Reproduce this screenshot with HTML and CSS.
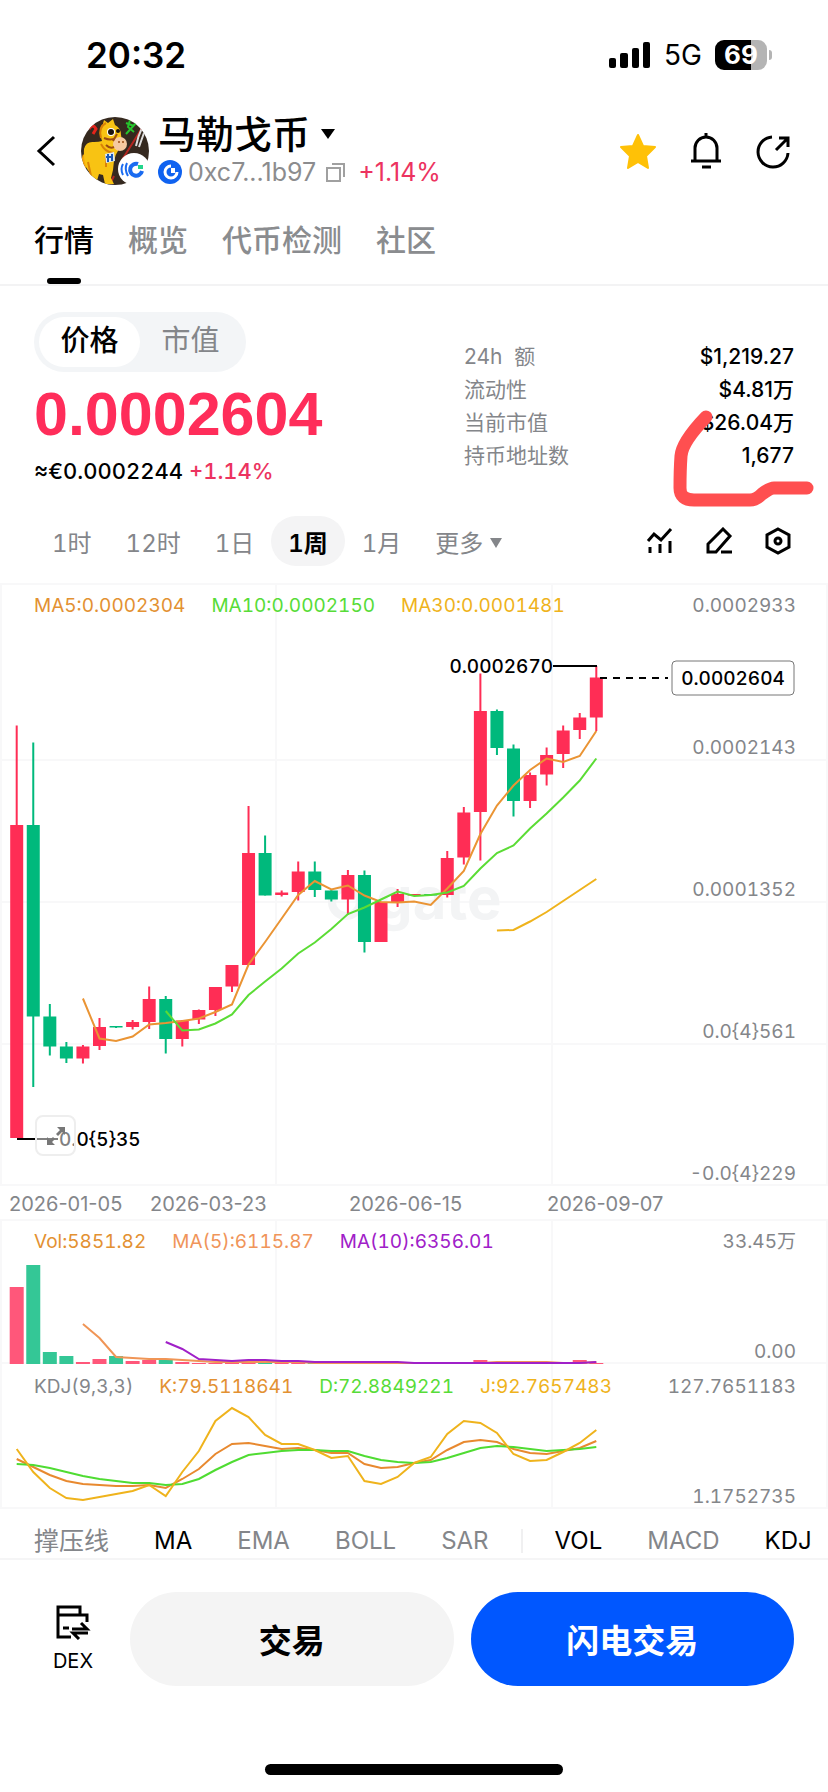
FILE: index.html
```html
<!DOCTYPE html>
<html lang="zh-CN">
<head>
    <meta charset="UTF-8">
    <meta name="viewport" content="width=device-width, initial-scale=1.0">
    <title>马勒戈币</title>
    <link rel="stylesheet" href="styles.css">
</head>
<body>
    <div class="status-bar">
        <span class="clock">20:32</span>
        <div class="status-icons">
            <svg class="signal" width="42" height="26" viewBox="0 0 42 26">
                <rect x="0" y="16" width="7" height="10" rx="2"/>
                <rect x="11" y="11" width="8" height="15" rx="2"/>
                <rect x="23" y="6" width="7" height="20" rx="2"/>
                <rect x="34" y="0" width="7" height="26" rx="2"/>
            </svg>
            <span class="network">5G</span>
            <span class="battery">69</span>
        </div>
    </div>

    <header class="header">
        <button type="button" class="icon-btn back" aria-label="返回">
            <svg width="20" height="32" viewBox="0 0 20 32"><path d="M18 2 3 16l15 14" fill="none" stroke="#000" stroke-width="3"/></svg>
        </button>
        <svg class="avatar" width="70" height="70" viewBox="0 0 70 70">
            <defs><clipPath id="coin"><circle cx="35" cy="35" r="34"/></clipPath></defs>
            <g clip-path="url(#coin)">
                <rect width="70" height="70" fill="#35291f"/>
                <path d="M9 13q4-6 7 0l-3 5" fill="none" stroke="#e3241b" stroke-width="3"/>
                <path d="M46 7l8 3M50 4l-2 7 6 5M56 7l-10 11" fill="none" stroke="#25c32c" stroke-width="2"/>
                <path d="M62 12 42 44M30 68l4-8" stroke="#b32620" stroke-width="2"/>
                <path d="M62 12q-4 8-6 18M65 14l-6 17" stroke="#ddd" stroke-width="2" fill="none"/>
                <path d="M3 38q-3 8 2 16l5-8z" fill="#f7a70c"/>
                <path d="M4 33q2-8 10-7 5 0 8-1-3-8 0-14l2-7 4 3 5-4 2 6q6 3 6 10l1 5q-4 4-3 9-4 6-5 12l-1 9-2 8 3 6h-9l-2-9-4-1-3 10-2 3H8l2-14q-7-8-6-24z" fill="#f8c313"/>
                <path d="M21 22q-3-11 5-15M8 46l3 14M26 38v13M21 28q4 8 12 9" fill="none" stroke="#d98207" stroke-width="2"/>
                <circle cx="40" cy="28" r="7" fill="#f6c9a0"/>
                <path d="M24 22q7 3 11 0M26 29q4 4 8 2M37 18l-4 7" stroke="#9b4b12" stroke-width="2" fill="none"/>
                <circle cx="31" cy="16" r="4" fill="#fff"/><circle cx="31" cy="16" r="3" fill="#1b1410"/>
                <circle cx="38" cy="15" r="2" fill="#1b1410"/>
                <circle cx="39" cy="26" r="1" fill="#9b4b12"/><circle cx="43" cy="26" r="1" fill="#9b4b12"/>
                <path d="M25 38l9-2 1 9-9 2z" fill="#dbe9f5"/>
                <path d="M28 38v8M26 41h5M32 38v7" stroke="#1a58b8" stroke-width="2" fill="none"/>
            </g>
            <circle cx="54" cy="53" r="16" fill="#fff"/>
            <path d="M58 48a6 6 0 1 0 4 7" fill="none" stroke="#1a6bf0" stroke-width="4"/>
            <path d="M58 49h5v4h-5z" fill="#22d58b"/>
            <path d="M47 47q-3 6 1 13M43 48q-3 5 0 11" fill="none" stroke="#1a6bf0" stroke-width="2"/>
        </svg>
        <div class="token">
            <h1 class="token-name">马勒戈币
                <svg width="16" height="10" viewBox="0 0 16 10"><path d="M1 0h14L8 10z"/></svg>
            </h1>
            <div class="token-sub">
                <svg width="24" height="24" viewBox="0 0 24 24"><circle cx="12" cy="12" r="12" fill="#0f62f0"/><path d="M13 6a6 6 0 1 0 6 6" fill="none" stroke="#fff" stroke-width="3"/><path d="M13 8h4v5h-4z" fill="#fff"/></svg>
                <span class="address">0xc7...1b97</span>
                <svg width="20" height="20" viewBox="0 0 20 20" fill="none" stroke="#a0a0a0" stroke-width="2"><path d="M1 6h13v13H1zM6 2h12v13"/></svg>
                <span class="up">+1.14%</span>
            </div>
        </div>
        <div class="header-actions">
            <button type="button" class="icon-btn" aria-label="收藏">
                <svg width="38" height="38" viewBox="0 0 38 38"><path d="M19 3l5 11 12 1-9 9 2 12-10-6-10 6 2-12-9-9 12-1z" fill="#ffc107" stroke="#ffc107" stroke-width="2" stroke-linejoin="round"/></svg>
            </button>
            <button type="button" class="icon-btn" aria-label="提醒">
                <svg width="38" height="38" viewBox="0 0 38 38" fill="none" stroke="#000" stroke-width="3"><path d="M19 1v4M8 29V16a11 11 0 0 1 22 0v13M4 29h30M15 35h9"/></svg>
            </button>
            <button type="button" class="icon-btn" aria-label="分享">
                <svg width="38" height="38" viewBox="0 0 38 38" fill="none" stroke="#000" stroke-width="3"><path d="M17 5a15 15 0 1 0 16 16M21 18 33 6M24 6h9v9"/></svg>
            </button>
        </div>
    </header>

    <nav class="tabs">
        <a href="#market" class="tab active">行情</a>
        <a href="#overview" class="tab">概览</a>
        <a href="#check" class="tab">代币检测</a>
        <a href="#community" class="tab">社区</a>
    </nav>

    <section class="summary" id="market">
        <div class="price-block">
            <div class="toggle">
                <button type="button" class="toggle-btn active">价格</button>
                <button type="button" class="toggle-btn">市值</button>
            </div>
            <div class="price">0.0002604</div>
            <div class="price-sub">≈€0.0002244 <span class="up">+1.14%</span></div>
        </div>
        <div class="stats">
            <dl>
                <div><dt>24h&nbsp; 额</dt><dd>$1,219.27</dd></div>
                <div><dt>流动性</dt><dd>$4.81万</dd></div>
                <div><dt>当前市值</dt><dd>$26.04万</dd></div>
                <div><dt>持币地址数</dt><dd>1,677</dd></div>
            </dl>
            <svg class="marker" width="144" height="102" viewBox="0 0 144 102"><path d="M36 9Q12 34 11 48T10 80Q10 92 24 92H80Q86 92 92 86 100 80 104 80H137" fill="none" stroke="#ff4f50" stroke-width="13" stroke-linecap="round"/></svg>
        </div>
    </section>

    <div class="periods">
        <button type="button" class="period">1时</button>
        <button type="button" class="period">12时</button>
        <button type="button" class="period">1日</button>
        <button type="button" class="period active">1周</button>
        <button type="button" class="period">1月</button>
        <button type="button" class="period">更多 <svg width="12" height="10" viewBox="0 0 12 10"><path d="M0 0h12L6 10z" fill="#84868a"/></svg></button>
        <div class="tools">
            <button type="button" class="icon-btn" aria-label="指标">
                <svg width="28" height="28" viewBox="0 0 28 28" fill="none" stroke="#000" stroke-width="3"><path d="M2 14 8 7l7 6L25 2M4 20v6M14 17v9M24 14v12"/></svg>
            </button>
            <button type="button" class="icon-btn" aria-label="画线">
                <svg width="28" height="28" viewBox="0 0 28 28" fill="none" stroke="#000" stroke-width="3"><path d="M18 2l7 7L11 25H3v-8zM16 25h11"/></svg>
            </button>
            <button type="button" class="icon-btn" aria-label="设置">
                <svg width="28" height="28" viewBox="0 0 28 28" fill="none" stroke="#000" stroke-width="3"><path d="M14 2l11 6v12l-11 6L3 20V8z"/><circle cx="14" cy="14" r="3"/></svg>
            </button>
        </div>
    </div>

    <section class="panel">
        <svg class="plot" id="kline" viewBox="0 0 828 603"></svg>
        <div class="legend">
            <span class="orange">MA5:0.0002304</span>
            <span class="green">MA10:0.0002150</span>
            <span class="yellow">MA30:0.0001481</span>
        </div>
        <div class="scale">
            <span>0.0002933</span>
            <span>0.0002143</span>
            <span>0.0001352</span>
            <span>0.0{4}561</span>
            <span>-0.0{4}229</span>
        </div>
        <button type="button" class="expand" aria-label="全屏">
            <svg width="22" height="22" viewBox="0 0 22 22" fill="#777"><path d="M12 2h8v8l-3-3-4 4-2-2 4-4zM2 12v8h8l-3-3 3-3-2-2-3 3z"/></svg>
        </button>
    </section>

    <div class="dates">
        <span>2026-01-05</span>
        <span>2026-03-23</span>
        <span>2026-06-15</span>
        <span>2026-09-07</span>
    </div>

    <section class="panel">
        <svg class="plot" id="volume" viewBox="0 0 828 145"></svg>
        <div class="legend">
            <span class="orange">Vol:5851.82</span>
            <span class="coral">MA(5):6115.87</span>
            <span class="purple">MA(10):6356.01</span>
        </div>
        <div class="scale">
            <span>33.45万</span>
            <span>0.00</span>
        </div>
    </section>

    <section class="panel">
        <svg class="plot" id="kdj" viewBox="0 0 828 145"></svg>
        <div class="legend">
            <span class="grey">KDJ(9,3,3)</span>
            <span class="orange">K:79.5118641</span>
            <span class="green">D:72.8849221</span>
            <span class="yellow">J:92.7657483</span>
        </div>
        <div class="scale">
            <span>127.7651183</span>
            <span>1.1752735</span>
        </div>
    </section>

    <div class="indicators">
        <button type="button" class="indicator">撑压线</button>
        <button type="button" class="indicator active">MA</button>
        <button type="button" class="indicator">EMA</button>
        <button type="button" class="indicator">BOLL</button>
        <button type="button" class="indicator">SAR</button>
        <span class="divider"></span>
        <button type="button" class="indicator active">VOL</button>
        <button type="button" class="indicator">MACD</button>
        <button type="button" class="indicator active">KDJ</button>
    </div>

    <footer class="trade-bar">
        <a href="#dex" class="dex">
            <svg width="36" height="36" viewBox="0 0 36 36" fill="none" stroke="#000" stroke-width="3"><path d="M16 33H3V3h22v8M3 11h29v7M8 24h6M17 25h15l-6-6M33 29H18l6 6"/></svg>
            DEX
        </a>
        <button type="button" class="trade">交易</button>
        <button type="button" class="trade primary">闪电交易</button>
    </footer>
    <div class="home-indicator"></div>

    <script>
        const RED = '#ff2d55';
        const GREEN = '#00b97c';
        const x = i => 16.7 + i * 16.56;

        // high, body top, body bottom, low, up/down
        const candles = [
            [142.5, 242, 555, 555, 1], [159.5, 242, 433.5, 504, 0], [421, 433.5, 463.5, 472.5, 0],
            [459, 463.5, 475.5, 480, 0], [462, 463.5, 475.5, 480.5, 1], [435, 444, 463, 467, 1],
            [443, 443, 444.5, 445, 0], [437, 439, 444, 446.5, 1], [403.5, 416, 439, 446, 1],
            [413, 416, 456, 470.5, 0], [437, 437.5, 456, 463.5, 1], [426.5, 427, 436.5, 441, 1],
            [404, 404, 427, 433, 1], [382, 382, 403.5, 409, 1], [223, 270, 382, 382, 1],
            [252.5, 270, 312.5, 312.5, 0], [307.5, 309.5, 312, 313.5, 1], [278.5, 288.5, 309, 317.5, 1],
            [278.5, 288.5, 307, 314, 0], [307, 307.5, 316.5, 318.5, 0], [287, 292, 316.5, 332, 1],
            [287.5, 292, 359, 369.5, 0], [319, 319, 359, 359, 1], [306, 311, 319.5, 324, 1],
            [311, 311, 312.5, 312.5, 1], [311, 311, 312.5, 312.5, 0], [268, 275, 312, 314.5, 1],
            [224, 229.5, 274.5, 281.5, 1], [90.5, 128, 229, 277.5, 1], [126.5, 128, 165, 172, 0],
            [161.5, 165.5, 218, 233.5, 0], [189.5, 192, 218, 225, 1], [164.5, 172, 191.5, 202.5, 1],
            [142.5, 147.5, 171, 185, 1], [130, 134.5, 147, 156, 1], [83, 94.5, 134.5, 148, 1]
        ];
        const ma5 = [415.5, 455.5, 458, 453.5, 441.5, 440, 438, 435.5, 429, 421.5, 381.5, 359, 335.5, 312, 298, 306.5, 302.5, 312.5, 319, 319.5, 318.5, 322, 305.5, 288, 251, 222.5, 202.5, 187, 175.5, 179, 173, 148];
        const ma10 = [428, 447.5, 446.5, 440.5, 431.5, 412, 398.5, 385.5, 370.5, 359.5, 346, 331, 324.5, 316.5, 308.5, 313, 312, 309.5, 303, 285.5, 270, 262.5, 245.5, 230.5, 214.5, 197.5, 175.5];
        const ma30 = [347.5, 347, 338.5, 329, 318, 307, 296];

        const volume = [77, 99, 12, 8, 2, 5, 8, 3, 4, 4, 2, 1, 1, 1, 2, 4, 2, 1, 1, 1, 1, 1, 1, 1, 1, 1, 1, 1, 4, 1, 1, 1, 1, 1, 4, 1];
        const volMa5 = [105, 119, 138, 139, 140, 140, 141, 142, 143, 143, 143, 143, 143, 143, 144, 144, 144, 144, 144, 144, 144, 144, 144, 144, 144, 143, 143, 143, 143, 144, 144, 143];
        const volMa10 = [123, 130, 140, 141, 142, 141, 141, 142, 142, 143, 143, 143, 143, 143, 143, 144, 144, 144, 144, 144, 144, 144, 144, 144, 144, 144, 143];

        const j = [85, 108, 124, 134, 136, 133, 130, 127, 121, 132, 108, 87, 57, 44, 53, 71, 80, 80, 86, 94, 92, 117, 120, 113, 99, 93, 70, 57, 59, 69, 90, 97, 96, 88, 79, 66];
        const k = [95, 103, 111, 117, 120, 121, 122, 122, 121, 124, 115, 105, 90, 80, 79, 82, 85, 84, 86, 89, 89, 100, 104, 103, 99, 96, 86, 78, 76, 78, 85, 89, 90, 87, 84, 77];
        const d = [100, 101, 104, 108, 112, 115, 117, 119, 119, 121, 120, 115, 106, 98, 91, 89, 87, 86, 86, 87, 87, 92, 96, 98, 99, 98, 94, 89, 84, 82, 83, 85, 87, 86, 85, 83];

        function line(points, start, color) {
            const path = points.map((y, n) => `${x(start + n)},${y}`).join(' ');
            return `<polyline points="${path}" fill="none" stroke="${color}" stroke-width="2"/>`;
        }
        function grid(height, rows) {
            const v = [1, 276, 552, 827].map(gx => `M${gx} 0V${height}`).join('');
            const h = rows.map(gy => `M0 ${gy}H828`).join('');
            return `<path d="${v}${h}" stroke="#f8f8f9" stroke-width="2"/>`;
        }
        function candle(c, i) {
            const color = c[4] ? RED : GREEN;
            return `<rect x="${x(i) - 1}" y="${c[0]}" width="2" height="${c[3] - c[0]}" fill="${color}"/>` +
                `<rect x="${x(i) - 6.5}" y="${c[1]}" width="13" height="${c[2] - c[1]}" fill="${color}"/>`;
        }

        document.getElementById('kline').innerHTML =
            grid(603, [1, 177, 319, 461, 602]) +
            '<circle cx="346" cy="319" r="14" class="mark-ring"/><text x="376" y="336" class="mark-text">gate</text>' +
            candles.map(candle).join('') +
            line(ma5, 4, '#ea9434') + line(ma10, 9, '#5bdc35') + line(ma30, 29, '#efb31c') +
            '<path d="M553 83H597M17 556H58" stroke="#000" stroke-width="2"/>' +
            '<path d="M600 95H668" stroke="#000" stroke-width="2" stroke-dasharray="7 6"/>' +
            '<text x="553" y="90" text-anchor="end" class="note">0.0002670</text>' +
            '<text x="59" y="563" class="note">0.0{5}35</text>' +
            '<rect x="672" y="78" width="122" height="34" rx="4" fill="#fff" stroke="#777"/>' +
            '<text x="733" y="102" text-anchor="middle" class="note">0.0002604</text>';

        document.getElementById('volume').innerHTML =
            grid(145, [1, 144]) +
            volume.map((h, i) => `<rect x="${x(i) - 7}" y="${145 - h}" width="14" height="${h}" fill="${candles[i][4] ? '#ff577a' : '#34c796'}"/>`).join('') +
            line(volMa5, 4, '#f09556') + line(volMa10, 9, '#a020c8');

        document.getElementById('kdj').innerHTML =
            grid(145, [144]) + line(k, 0, '#e8892f') + line(d, 0, '#4fdc32') + line(j, 0, '#efb31c');
    </script>
</body>
</html>
```
FILE: styles.css
```css
* { box-sizing: border-box; }
body {
    font-family: Inter, "Noto Sans CJK SC", sans-serif;
    background-color: #fff;
    color: #000;
    margin: 0;
}
button {
    font-family: inherit;
    border: none;
    background: none;
    padding: 0;
    cursor: pointer;
}
a { color: inherit; text-decoration: none; }
svg { display: block; }
.icon-btn { display: block; }
.up { color: #ec3360; }

.status-bar {
    display: flex;
    justify-content: space-between;
    align-items: center;
    height: 100px;
    padding: 10px 61px 0 86px;
}
.clock { font-size: 35px; font-weight: 600; }
.status-icons { display: flex; align-items: center; gap: 13px; }
.network { font-size: 28px; }
.battery {
    position: relative;
    width: 52px;
    height: 30px;
    line-height: 30px;
    border-radius: 9px;
    background: linear-gradient(90deg, #000 70%, #b4b4b4 70%);
    color: #fff;
    font-size: 26px;
    font-weight: 700;
    text-align: center;
}
.battery::after {
    content: "";
    position: absolute;
    left: 54px;
    top: 10px;
    width: 3px;
    height: 10px;
    border-radius: 0 3px 3px 0;
    background: #b4b4b4;
}

.header {
    display: flex;
    align-items: center;
    height: 102px;
    padding: 0 35px 0 36px;
}
.back { margin-right: 24px; }
.avatar { flex: none; }
.token { margin-left: 8px; }
.token-name {
    display: flex;
    align-items: center;
    gap: 10px;
    margin: 0;
    font-size: 38px;
    line-height: 42px;
    font-weight: 500;
}
.token-sub {
    display: flex;
    align-items: center;
    gap: 6px;
    font-size: 25px;
    line-height: 34px;
}
.address { color: #8c8c8e; margin-right: 4px; }
.token-sub .up { margin-left: 6px; }
.header-actions { display: flex; gap: 30px; margin-left: auto; }

.tabs {
    display: flex;
    gap: 34px;
    padding: 0 34px;
    border-bottom: 2px solid #f3f3f4;
}
.tab {
    position: relative;
    font-size: 30px;
    line-height: 76px;
    height: 82px;
    color: #8a8c8f;
    font-weight: 500;
}
.tab.active { color: #000; }
.tab.active::after {
    content: "";
    position: absolute;
    left: 13px;
    bottom: 0;
    width: 34px;
    height: 6px;
    border-radius: 3px;
    background: #000;
}

.summary {
    display: flex;
    justify-content: space-between;
    padding: 26px 34px 30px;
}
.toggle {
    display: flex;
    width: 212px;
    padding: 5px;
    border-radius: 30px;
    background: #f3f5f7;
}
.toggle-btn {
    width: 101px;
    height: 50px;
    border-radius: 25px;
    font-size: 29px;
    line-height: 48px;
    padding-bottom: 2px;
    color: #84868a;
}
.toggle-btn.active { background: #fff; color: #000; font-weight: 500; }
.price {
    font-family: "Liberation Sans", Arial, sans-serif;
    color: #ff2d5a;
    font-size: 61px;
    font-weight: 700;
    line-height: 84px;
}
.price-sub {
    font-size: 22px;
    line-height: 30px;
    font-weight: 500;
    font-variant-numeric: tabular-nums;
}
.stats { position: relative; width: 330px; padding-top: 28px; }
.stats dl { margin: 0; }
.stats dl div {
    display: flex;
    justify-content: space-between;
    font-size: 21px;
    line-height: 33px;
}
.stats dt { color: #84868a; }
.stats dd { margin: 0; font-weight: 500; }
.marker { position: absolute; right: -20px; top: 96px; }

.periods {
    display: flex;
    align-items: center;
    padding: 0 36px 17px 35px;
}
.period {
    padding: 0 17px;
    height: 50px;
    border-radius: 25px;
    font-size: 24px;
    font-variant-numeric: tabular-nums;
    color: #84868a;
}
.period.active { background: #f4f4f5; color: #000; font-weight: 600; }
.period svg { display: inline-block; margin-bottom: 4px; }
.tools { display: flex; gap: 31px; margin-left: auto; }

.panel { display: grid; position: relative; }
.plot { grid-area: 1 / 1; width: 100%; }
.plot, .legend, .scale { font-variant-numeric: tabular-nums; }
.legend {
    grid-area: 1 / 1;
    display: flex;
    align-self: start;
    gap: 26px;
    padding: 8px 34px 0;
    font-size: 19px;
    line-height: 30px;
}
.scale {
    grid-area: 1 / 1;
    justify-self: end;
    display: flex;
    flex-direction: column;
    justify-content: space-between;
    align-items: flex-end;
    padding: 8px 32px 0 0;
    margin-bottom: -3px;
    color: #84868a;
    font-size: 19px;
    line-height: 30px;
}
.orange { color: #e39132; }
.green { color: #57dc38; }
.yellow { color: #efb31c; }
.coral { color: #f0955a; }
.purple { color: #a020c8; }
.grey { color: #84868a; }
.note { font-size: 19px; font-weight: 500; }
.mark-text { font-size: 58px; font-weight: 700; fill: #f3f4f5; }
.mark-ring { fill: none; stroke: #f3f4f5; stroke-width: 8px; }
.expand {
    position: absolute;
    left: 35px;
    bottom: 30px;
    width: 41px;
    height: 41px;
    border: 2px solid #eee;
    border-radius: 8px;
    background: rgba(255, 255, 255, 0.5);
}
.expand svg { margin: auto; }

.dates {
    display: grid;
    grid-template-columns: 141fr 199fr 198fr 281fr;
    padding: 4px 0 0 9px;
    color: #84868a;
    font-size: 20px;
    line-height: 29px;
}

.indicators {
    display: flex;
    align-items: center;
    gap: 45px;
    padding: 14px 20px 0 34px;
    height: 51px;
    overflow: hidden;
    border-bottom: 2px solid #f5f5f6;
}
.indicator { font-size: 24px; line-height: 34px; color: #84868a; white-space: nowrap; }
.indicator:first-child { font-size: 25px; }
.indicator.active { color: #000; }
.divider { flex: none; width: 2px; height: 24px; margin: 0 -13px; background: #f0f0f1; }

.trade-bar {
    display: flex;
    align-items: center;
    gap: 17px;
    padding: 32px 34px 0;
}
.dex {
    display: flex;
    flex-direction: column;
    align-items: center;
    gap: 7px;
    width: 79px;
    padding-right: 1px;
    font-size: 20px;
    line-height: 28px;
}
.trade {
    flex: 1;
    height: 94px;
    border-radius: 47px;
    background: #f4f4f4;
    font-size: 33px;
    font-weight: 600;
}
.trade.primary { background: #0057ff; color: #fff; }
.home-indicator {
    width: 36%;
    height: 11px;
    margin: 78px auto 16px;
    border-radius: 6px;
    background: #000;
}
```
